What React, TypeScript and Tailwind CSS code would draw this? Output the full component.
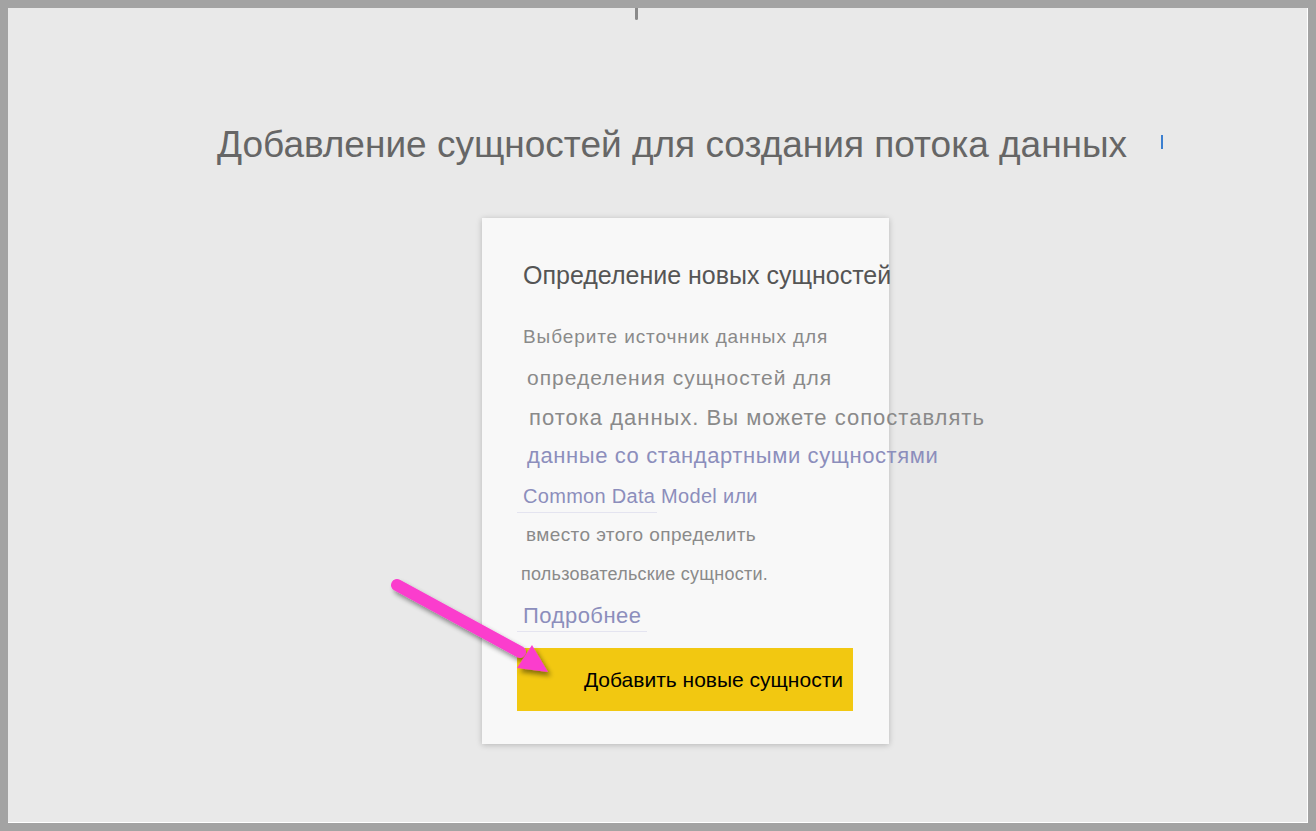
export default function App() {
  return (
    <div
      className="h-[831px] w-[1316px] overflow-hidden bg-[#a3a3a3] p-[8px]"
      style={{ fontFamily: '"Liberation Sans", Arial, sans-serif' }}
    >
      <div className="relative flex h-full w-full flex-col items-start border-b border-r border-white bg-[#e9e9e9]">
        {/* stray marks from the original capture */}
        <div className="absolute left-[627px] top-0 h-[12px] w-[3px] rounded-b bg-[#8a8a8a]" />
        <div className="absolute left-[1153px] top-[127px] h-[14px] w-[2px] bg-[#3b7fd0]" />

        <h1 className="mt-[111px] ml-[209px] whitespace-nowrap text-[37px] leading-[52px] font-normal text-[#666666]">
          Добавление сущностей для создания потока данных
        </h1>

        <div className="mt-[47px] ml-[474px] flex h-[526px] w-[407px] flex-col bg-[#f8f8f8] shadow-[0_1px_6px_rgba(0,0,0,0.22)]">
          <div className="ml-[41px] mt-[42px] whitespace-nowrap text-[25px] leading-[30px] text-[#555555]">
            Определение новых сущностей
          </div>

          <div className="mt-[35px] flex flex-col whitespace-nowrap">
            <div className="ml-[41px] h-[41px] text-[19px] leading-[24px] tracking-[0.9px] text-[#8a8a8a]">
              Выберите источник данных для
            </div>
            <div className="ml-[45px] h-[40px] text-[21px] leading-[24px] tracking-[1px] text-[#8a8a8a]">
              определения сущностей для
            </div>
            <div className="ml-[47px] h-[37px] text-[22px] leading-[24px] tracking-[1px] text-[#8a8a8a]">
              потока данных. Вы можете сопоставлять
            </div>
            <div className="ml-[45px] h-[41px] text-[22px] leading-[26px] tracking-[0.6px] text-[#8c8ebc]">
              данные со стандартными сущностями
            </div>
            <div className="ml-[41px] flex h-[39px] flex-col text-[20px] leading-[24px] tracking-[0.3px] text-[#8c8ebc]">
              <span>Common Data Model или</span>
              <span className="-ml-[6px] mt-[4px] h-px w-[140px] bg-[#e4e4f0]" />
            </div>
            <div className="ml-[44px] h-[39px] text-[19px] leading-[24px] tracking-[0.4px] text-[#8a8a8a]">
              вместо этого определить
            </div>
            <div className="ml-[39px] h-[41px] text-[18px] leading-[24px] tracking-[0.25px] text-[#8a8a8a]">
              пользовательские сущности.
            </div>
            <div className="ml-[41px] flex flex-col text-[22px] leading-[26px] tracking-[0.5px] text-[#8c8ebc]">
              <span>Подробнее</span>
              <span className="-ml-[6px] mt-[2px] h-px w-[130px] bg-[#e4e4f0]" />
            </div>
          </div>

          <button className="ml-[35px] mt-[16px] flex h-[63px] w-[336px] items-center justify-end bg-[#f2c811] pr-[10px] text-[21px] text-black">
            Добавить новые сущности
          </button>
        </div>

        {/* pink callout arrow */}
        <svg
          className="pointer-events-none absolute left-[362px] top-[552px]"
          width="200"
          height="130"
          viewBox="0 0 200 130"
        >
          <defs>
            <filter id="sh" x="-20%" y="-20%" width="140%" height="140%">
              <feGaussianBlur in="SourceAlpha" stdDeviation="2.5" />
              <feOffset dx="3" dy="4" result="b" />
              <feComponentTransfer>
                <feFuncA type="linear" slope="0.45" />
              </feComponentTransfer>
              <feMerge>
                <feMergeNode />
                <feMergeNode in="SourceGraphic" />
              </feMerge>
            </filter>
          </defs>
          <g filter="url(#sh)">
            <line
              x1="27"
              y1="25"
              x2="150"
              y2="92"
              stroke="#fb3ccd"
              strokeWidth="12"
              strokeLinecap="round"
            />
            <polygon points="178,112 147,108 162,85" fill="#fb3ccd" />
          </g>
        </svg>
      </div>
    </div>
  );
}
